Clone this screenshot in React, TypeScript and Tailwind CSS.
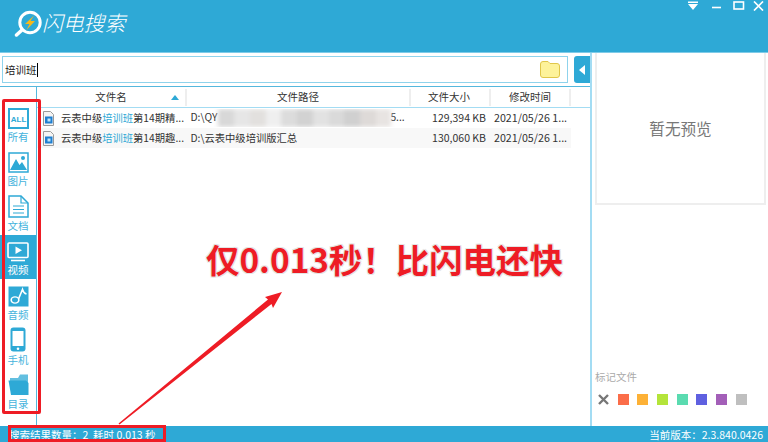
import React from "react";

const font = { fontFamily: '"Noto Sans CJK SC", "Noto Sans", sans-serif' };

const ICONS: Record<string, (c: string, bg: string) => React.ReactNode> = {
  all: (c, bg) => (
    <svg width="21" height="21" viewBox="0 0 21 21">
      <rect x="1" y="1" width="19" height="19" fill={bg} stroke={c} strokeWidth="2" />
      <text x="10.5" y="14" textAnchor="middle" fontSize="8" fontWeight="800" fill={c} fontFamily="Liberation Sans">ALL</text>
    </svg>
  ),
  image: (c, bg) => (
    <svg width="21" height="21" viewBox="0 0 21 21">
      <rect x="1" y="1" width="19" height="19" fill={bg} stroke={c} strokeWidth="1.5" />
      <circle cx="15" cy="6" r="2" fill={c} />
      <path d="M2 18 L8 7 L11.5 13 L14 10 L19 18 Z" fill={c} />
    </svg>
  ),
  doc: (c, bg) => (
    <svg width="21" height="23" viewBox="0 0 21 23">
      <path d="M1 1 H13 L20 8 V22 H1 Z" fill={bg} stroke={c} strokeWidth="1.5" />
      <path d="M13 1 V8 H20" fill="none" stroke={c} strokeWidth="1.2" />
      <path d="M5 11 H16 M5 14.5 H16 M5 18 H16" stroke={c} strokeWidth="1.2" />
    </svg>
  ),
  video: (c) => (
    <svg width="22" height="20" viewBox="0 0 22 20">
      <rect x="1" y="1" width="20" height="14.5" rx="1" fill="none" stroke={c} strokeWidth="1.6" />
      <path d="M8.5 4.5 L15 8.3 L8.5 12 Z" fill={c} />
      <path d="M4 18.5 H18" stroke={c} strokeWidth="1.6" />
    </svg>
  ),
  audio: (c) => (
    <svg width="21" height="21" viewBox="0 0 21 21">
      <rect x="0.5" y="0.5" width="20" height="20" fill={c} />
      <ellipse cx="7" cy="14" rx="4.6" ry="3.8" fill="#fff" />
      <ellipse cx="7" cy="14" rx="3" ry="2.4" fill={c} />
      <path d="M10.5 13 L14.5 3.5 C15.2 6 16.5 7.5 18.5 8" fill="none" stroke="#fff" strokeWidth="1.6" />
    </svg>
  ),
  phone: (c) => (
    <svg width="16" height="25" viewBox="0 0 16 25">
      <rect x="0.5" y="0.5" width="15" height="24" rx="3" fill={c} />
      <rect x="2.5" y="4" width="11" height="15" fill="#fff" />
      <circle cx="8" cy="21.7" r="1.3" fill="#fff" />
    </svg>
  ),
  folder: (c) => (
    <svg width="21" height="22" viewBox="0 0 21 22">
      <path d="M2 4 L10 4 L12 0.5 L20 0.5 V9 H2 Z" fill={c} opacity="0.75" />
      <path d="M0.5 6.5 H18 L20.5 9 V21 H3 Z" fill={c} />
    </svg>
  ),
};

const NAV = [
  { k: "all", t: "所有" },
  { k: "image", t: "图片" },
  { k: "doc", t: "文档" },
  { k: "video", t: "视频", active: true },
  { k: "audio", t: "音频" },
  { k: "phone", t: "手机" },
  { k: "folder", t: "目录" },
];

const BLUE = "#2ea9d6";

function FileIcon() {
  return (
    <svg width="11" height="15" viewBox="0 0 11 15" className="shrink-0">
      <path d="M0.5 0.5 H7.5 L10.5 3.5 V14.5 H0.5 Z" fill="#f4f4f4" stroke="#9a9a9a" />
      <rect x="2" y="5.5" width="7.5" height="7" fill="#1f7fd0" />
      <rect x="4.5" y="7.5" width="3" height="3" fill="#bfe6f7" />
    </svg>
  );
}

function Row({ alt, tail, path }: { alt?: boolean; tail: string; path: React.ReactNode }) {
  return (
    <div className={`flex h-[20px] w-[534px] items-center text-[#333] ${alt ? "bg-[#f8f8f8]" : ""}`}>
      <div className="flex w-[150px] items-center pl-[6px] text-[10.3px]">
        <FileIcon />
        <span className="ml-[7px] whitespace-nowrap">
          云表中级<span className="text-[#2ea9d6]">培训班</span>第14期{tail}
        </span>
      </div>
      <div className="w-[224px] overflow-hidden whitespace-nowrap pl-[3.5px] text-[10.3px]">{path}</div>
      <div className="w-[78px] whitespace-nowrap pr-[3px] text-right text-[10.5px]">{alt ? "130,060 KB" : "129,394 KB"}</div>
      <div className="ml-[5px] whitespace-nowrap text-[10.7px]">2021/05/26 1...</div>
    </div>
  );
}

function Blur() {
  const shades = ["#d8d8d8", "#e6e6e6", "#e2e0de", "#efefef", "#dcdcdc", "#d2d2d2", "#e2e2e2", "#dadada", "#d0d0d0", "#dedad8", "#e8e4e2"];
  return (
    <span className="mr-[-1px] ml-[1px] inline-flex h-[18px] w-[173px] items-stretch align-middle blur-[2px]">
      {shades.map((s, i) => (
        <span key={i} className="flex-1" style={{ backgroundColor: s }} />
      ))}
    </span>
  );
}

export default function App() {
  return (
    <div className="relative flex h-[442px] w-[768px] flex-col overflow-hidden bg-white" style={font}>
      {/* title bar */}
      <div className="flex h-[53px] shrink-0 items-start border-b border-[#7fcbe8] bg-[#2ea9d6]">
        <div className="mt-[10px] ml-[14px] flex items-center">
          <svg width="29" height="27" viewBox="0 0 29 27">
            <circle cx="16" cy="12.5" r="10.2" fill="none" stroke="#fff" strokeWidth="3" />
            <path d="M8 20 L2.5 25" stroke="#fff" strokeWidth="3.5" strokeLinecap="round" />
            <path d="M20 5.5 L11 14 H15.5 L12.5 20 L21 11 H16.5 Z" fill="#f5b81c" />
          </svg>
          <span className="ml-[-1px] mb-[2px] text-[20.8px] font-light italic leading-none text-white">闪电搜索</span>
        </div>
        <div className="ml-auto flex items-center pt-[1px] pr-[4px]">
          <svg width="12" height="10" viewBox="0 0 12 10" className="mr-[12px]">
            <path d="M1 0.5 H11 V2 H1 Z M1 3 H11 L6 9 Z" fill="#fff" />
          </svg>
          <svg width="12" height="10" viewBox="0 0 12 10" className="mr-[10px]">
            <path d="M1 6.5 H10" stroke="#fff" strokeWidth="1.6" />
          </svg>
          <svg width="12" height="10" viewBox="0 0 12 10" className="mr-[8px]">
            <rect x="1" y="1" width="9.5" height="7" fill="none" stroke="#fff" strokeWidth="1.6" />
          </svg>
          <svg width="11" height="10" viewBox="0 0 11 10">
            <path d="M1 0.5 L10 9.5 M10 0.5 L1 9.5" stroke="#fff" strokeWidth="1.7" />
          </svg>
        </div>
      </div>

      {/* middle */}
      <div className="flex min-h-0 flex-1">
        <div className="flex w-[590px] shrink-0 flex-col">
          {/* search */}
          <div className="flex h-[34px] shrink-0 items-start border-b border-[#55b8dd] pt-[3px] pl-[2px]">
            <div className="flex h-[27px] w-[566px] items-center border border-[#8fd3ec] pr-[7px] pl-[2px] text-[10.5px] text-[#222]">
              <span>培训班</span>
              <span className="h-[14px] w-px bg-black" />
              <svg width="20" height="17" viewBox="0 0 20 17" className="ml-auto">
                <path d="M0.5 3 Q0.5 0.5 3 0.5 H8 L10 2.5 H17 Q19.5 2.5 19.5 5 V14 Q19.5 16.5 17 16.5 H3 Q0.5 16.5 0.5 14 Z" fill="#fdf29a" stroke="#e0c64a" />
              </svg>
            </div>
            <div className="ml-[6px] flex h-[27px] w-[16px] items-center justify-center rounded-l-[3px] bg-[#2ea9d6]">
              <svg width="6" height="10" viewBox="0 0 6 10">
                <path d="M6 0 V10 L0 5 Z" fill="#fff" />
              </svg>
            </div>
          </div>

          <div className="flex min-h-0 flex-1">
            {/* sidebar */}
            <div className="flex w-[37px] shrink-0 flex-col border-r border-[#55b8dd] pt-[14px]">
              {NAV.map((n) => {
                const c = n.active ? "#ffffff" : BLUE;
                return (
                  <div
                    key={n.k}
                    className={`flex h-[44.6px] flex-col items-center justify-end pb-[2px] ${n.active ? "bg-[#2ea9d6] text-white" : "text-[#45b3dc]"}`}
                  >
                    <div className="flex h-[26px] items-end">{ICONS[n.k](c, "#ffffff")}</div>
                    <span className="text-[10.5px] leading-[15px]">{n.t}</span>
                  </div>
                );
              })}
            </div>

            {/* list */}
            <div className="flex min-w-0 flex-1 flex-col">
              <div className="flex h-[21px] shrink-0 items-center border-b border-[#a3dcf3] text-[10.5px] text-[#333]">
                <div className="relative flex h-[17px] w-[150px] items-center justify-center border-r-2 border-[#eeeeee]">
                  文件名
                  <svg width="8" height="5" viewBox="0 0 8 5" className="absolute top-[6px] left-[134px]">
                    <path d="M0 5 L4 0 L8 5 Z" fill="#2ea9d6" />
                  </svg>
                </div>
                <div className="flex h-[17px] w-[224px] items-center justify-center border-r-2 border-[#eeeeee]">文件路径</div>
                <div className="flex h-[17px] w-[80px] items-center justify-center border-r-2 border-[#eeeeee] pr-[2px]">文件大小</div>
                <div className="flex h-[17px] w-[80px] items-center justify-center border-r-2 border-[#eeeeee]">修改时间</div>
              </div>
              <Row
                tail="精..."
                path={
                  <>
                    D:\QY
                    <Blur />
                    5...
                  </>
                }
              />
              <Row alt tail="趣..." path="D:\云表中级培训版汇总" />
            </div>
          </div>
        </div>

        {/* right panel */}
        <div className="flex min-w-0 flex-1 flex-col border-l-2 border-[#a3dcf3] pl-[3px]">
          <div className="flex h-[152px] w-[171px] shrink-0 items-center justify-center border-x-2 border-b-2 border-[#eeeeee] pt-[2px] text-[15.6px] text-[#777]">
            暂无预览
          </div>
          <div className="mt-auto pb-[21px]">
            <div className="text-[10.5px] leading-[14px] text-[#aaa]">标记文件</div>
            <div className="mt-[10px] flex items-center gap-[8.7px] pl-[3px]">
              <svg width="11" height="11" viewBox="0 0 11 11">
                <path d="M1 1 L10 10 M10 1 L1 10" stroke="#777" strokeWidth="2.4" />
              </svg>
              {["#fb6d49", "#fdb136", "#b4e43a", "#5adbb0", "#5f60e0", "#a35fb8", "#bfbfbf"].map((c) => (
                <span key={c} className="h-[11px] w-[11px]" style={{ backgroundColor: c }} />
              ))}
            </div>
          </div>
        </div>
      </div>

      {/* status */}
      <div className="flex h-[16px] shrink-0 items-center justify-between bg-[#2ea9d6] pt-[2px] pr-[5px] pl-[9px] text-[10.5px] text-white">
        <span className="whitespace-pre">搜索结果数量：2  耗时 0.013 秒</span>
        <span>当前版本：2.3.840.0426</span>
      </div>

      {/* annotations */}
      <div className="absolute top-[99px] left-[2px] h-[315px] w-[39px] rounded-[2px] border-[3px] border-[#ee1c25]" />
      <div className="absolute top-[425px] left-[8px] h-[17px] w-[158px] border-[3px] border-[#ee1c25]" />
      <svg width="190" height="150" viewBox="0 0 190 150" className="absolute top-[285px] left-[105px]">
        <path d="M13.5 138.5 L163 14.5 L160 12 L177 7 L168 23 L166.5 19 L14.5 139.5 Z" fill="#ee1c25" />
      </svg>
      <div className="absolute top-[236px] left-[206px] whitespace-nowrap text-[33.4px] leading-[46px] font-bold text-[#ee1c25] [text-shadow:1px_1px_0_#e4e4e4,-1px_-1px_0_#e4e4e4,1px_-1px_0_#e4e4e4,-1px_1px_0_#e4e4e4]">
        仅0.013秒！比闪电还快
      </div>
    </div>
  );
}
